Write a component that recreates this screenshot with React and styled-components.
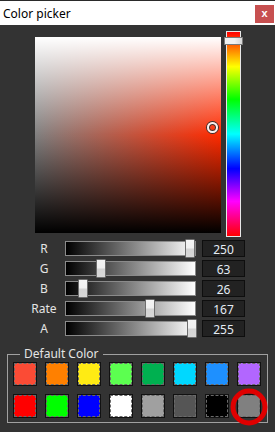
import styled, { createGlobalStyle } from 'styled-components';

const HUE = 10;

const SLIDERS = [
  { label: 'R', value: 250 },
  { label: 'G', value: 63 },
  { label: 'B', value: 26 },
  { label: 'Rate', value: 167 },
  { label: 'A', value: 255 },
];

const SWATCHES = [
  '#fb4b35', '#ff8000', '#ffeb14', '#5cff50', '#00b050', '#00d8ff', '#1e90ff', '#b266ff',
  '#ff0000', '#00ff00', '#0000ff', '#ffffff', '#a0a0a0', '#555555', '#000000', '#808080',
];

const GlobalStyle = createGlobalStyle`
  html, body {
    margin: 0;
    padding: 0;
    background: #333333;
  }
  * {
    box-sizing: border-box;
  }
`;

const App = () => {
  return (
    <>
      <GlobalStyle />
      <Window>
        <TitleBar>
          <Title>Color picker</Title>
          <CloseButton>x</CloseButton>
        </TitleBar>
        <Body>
          <PickerRow>
            <Square $hue={HUE}>
              <PickerDot style={{ left: 172, top: 85 }} />
            </Square>
            <HueBar>
              <HueThumb style={{ top: 5 }} />
            </HueBar>
          </PickerRow>
          <Sliders>
            {SLIDERS.map((s) => (
              <SliderRow key={s.label}>
                <Label>{s.label}</Label>
                <Track>
                  <Thumb style={{ left: Math.round((s.value / 255) * 121) }} />
                </Track>
                <ValueBox>{s.value}</ValueBox>
              </SliderRow>
            ))}
          </Sliders>
          <Group>
            <Legend>Default Color</Legend>
            <SwatchGrid>
              {SWATCHES.map((c, i) => (
                <Swatch key={i} $color={c}>
                  {i === SWATCHES.length - 1 && (
                    <Ring width="40" height="40" viewBox="0 0 40 40">
                      <circle cx="20" cy="20" r="16" fill="none" stroke="#e00000" strokeWidth="5" />
                    </Ring>
                  )}
                </Swatch>
              ))}
            </SwatchGrid>
          </Group>
        </Body>
      </Window>
    </>
  );
};

const Window = styled.div`
  width: 275px;
  height: 432px;
  background: #333333;
  border-top: 1px solid #2a2a2a;
  display: flex;
  flex-direction: column;
  font-family: 'Noto Sans', 'Open Sans', sans-serif;
  overflow: hidden;
`;

const TitleBar = styled.div`
  height: 24px;
  background: #ffffff;
  display: flex;
  align-items: center;
  justify-content: space-between;
  padding: 0 1px 0 3px;
`;

const Title = styled.span`
  font-size: 12px;
  color: #000;
  margin-top: 1px;
`;

const CloseButton = styled.div`
  width: 19px;
  height: 18px;
  margin-top: 2px;
  background: #c75050;
  color: #fff;
  font-size: 11px;
  font-weight: bold;
  font-family: 'Liberation Sans', sans-serif;
  display: flex;
  align-items: center;
  justify-content: center;
  padding-bottom: 2px;
`;

const Body = styled.div`
  padding-top: 6px;
  display: flex;
  flex-direction: column;
`;

const PickerRow = styled.div`
  display: flex;
  align-items: flex-start;
  gap: 5px;
  padding-left: 35px;
`;

const Square = styled.div`
  position: relative;
  margin-top: 6px;
  width: 186px;
  height: 196px;
  background:
    linear-gradient(
      to bottom,
      #fff 0%,
      rgba(255, 255, 255, 0) 50%,
      rgba(0, 0, 0, 0) 50%,
      #000 100%
    ),
    linear-gradient(to right, #808080, hsl(${(p) => p.$hue}, 100%, 50%));
`;

const PickerDot = styled.div`
  position: absolute;
  width: 11px;
  height: 11px;
  border-radius: 50%;
  border: 2px solid #f4f4f4;
  box-shadow: 0 0 0 1px #333, inset 0 0 0 1px #333;
`;

const HueBar = styled.div`
  position: relative;
  width: 15px;
  height: 206px;
  border: 1px solid #e6e6e6;
  background: linear-gradient(
    to bottom,
    #ff0000 0%,
    #ffff00 17%,
    #00ff00 33%,
    #00ffff 50%,
    #0000ff 67%,
    #ff00ff 83%,
    #ff0000 100%
  );
`;

const HueThumb = styled.div`
  position: absolute;
  left: -3px;
  width: 19px;
  height: 8px;
  border: 1px solid #7a7a7a;
  background: linear-gradient(to right, #f2f2f2 0%, #f2f2f2 55%, #d6d6d6 100%);
`;

const Sliders = styled.div`
  margin-top: 3px;
  display: flex;
  flex-direction: column;
  gap: 3px;
`;

const SliderRow = styled.div`
  display: grid;
  grid-template-columns: 32px 131px 44px;
  column-gap: 5px;
  align-items: center;
  padding-left: 28px;
  height: 17px;

  & > :last-child {
    margin-left: 1px;
  }
`;

const Label = styled.span`
  text-align: center;
  color: #e4e4e4;
  font-size: 12px;
`;

const Track = styled.div`
  position: relative;
  height: 15px;
  border: 1px solid #8a8a8a;
  background: linear-gradient(to right, #000, #ffffff);
`;

const Thumb = styled.div`
  position: absolute;
  top: -3px;
  width: 10px;
  height: 19px;
  border: 1px solid #6e6e6e;
  border-radius: 1px;
  background: linear-gradient(to bottom, #f4f4f4 0%, #f0f0f0 45%, #d4d4d4 55%, #d8d8d8 100%);
`;

const ValueBox = styled.div`
  height: 17px;
  background: #222222;
  border: 1px solid #0e0e0e;
  color: #e4ecf4;
  font-size: 12px;
  display: flex;
  align-items: center;
  justify-content: center;
  padding-top: 2px;
`;

const Group = styled.fieldset`
  margin: 9px 0 0 7px;
  width: 261px;
  border: 1px solid #a0a0a0;
  padding: 0 6px 4px 5px;
`;

const Legend = styled.legend`
  margin-left: 7px;
  padding: 0 4px;
  color: #e4e4e4;
  font-size: 12px;
  line-height: 16px;
`;

const SwatchGrid = styled.div`
  display: grid;
  grid-template-columns: repeat(8, 24px);
  gap: 8px;
`;

const Swatch = styled.div`
  position: relative;
  width: 24px;
  height: 24px;
  background: ${(p) => p.$color};
  border: 1px solid #111;

  &::after {
    content: '';
    position: absolute;
    inset: 0;
    border: 1px dashed #6a6a6a;
  }
`;

const Ring = styled.svg`
  position: absolute;
  left: -9px;
  top: -8px;
  z-index: 2;
`;

export default App;
